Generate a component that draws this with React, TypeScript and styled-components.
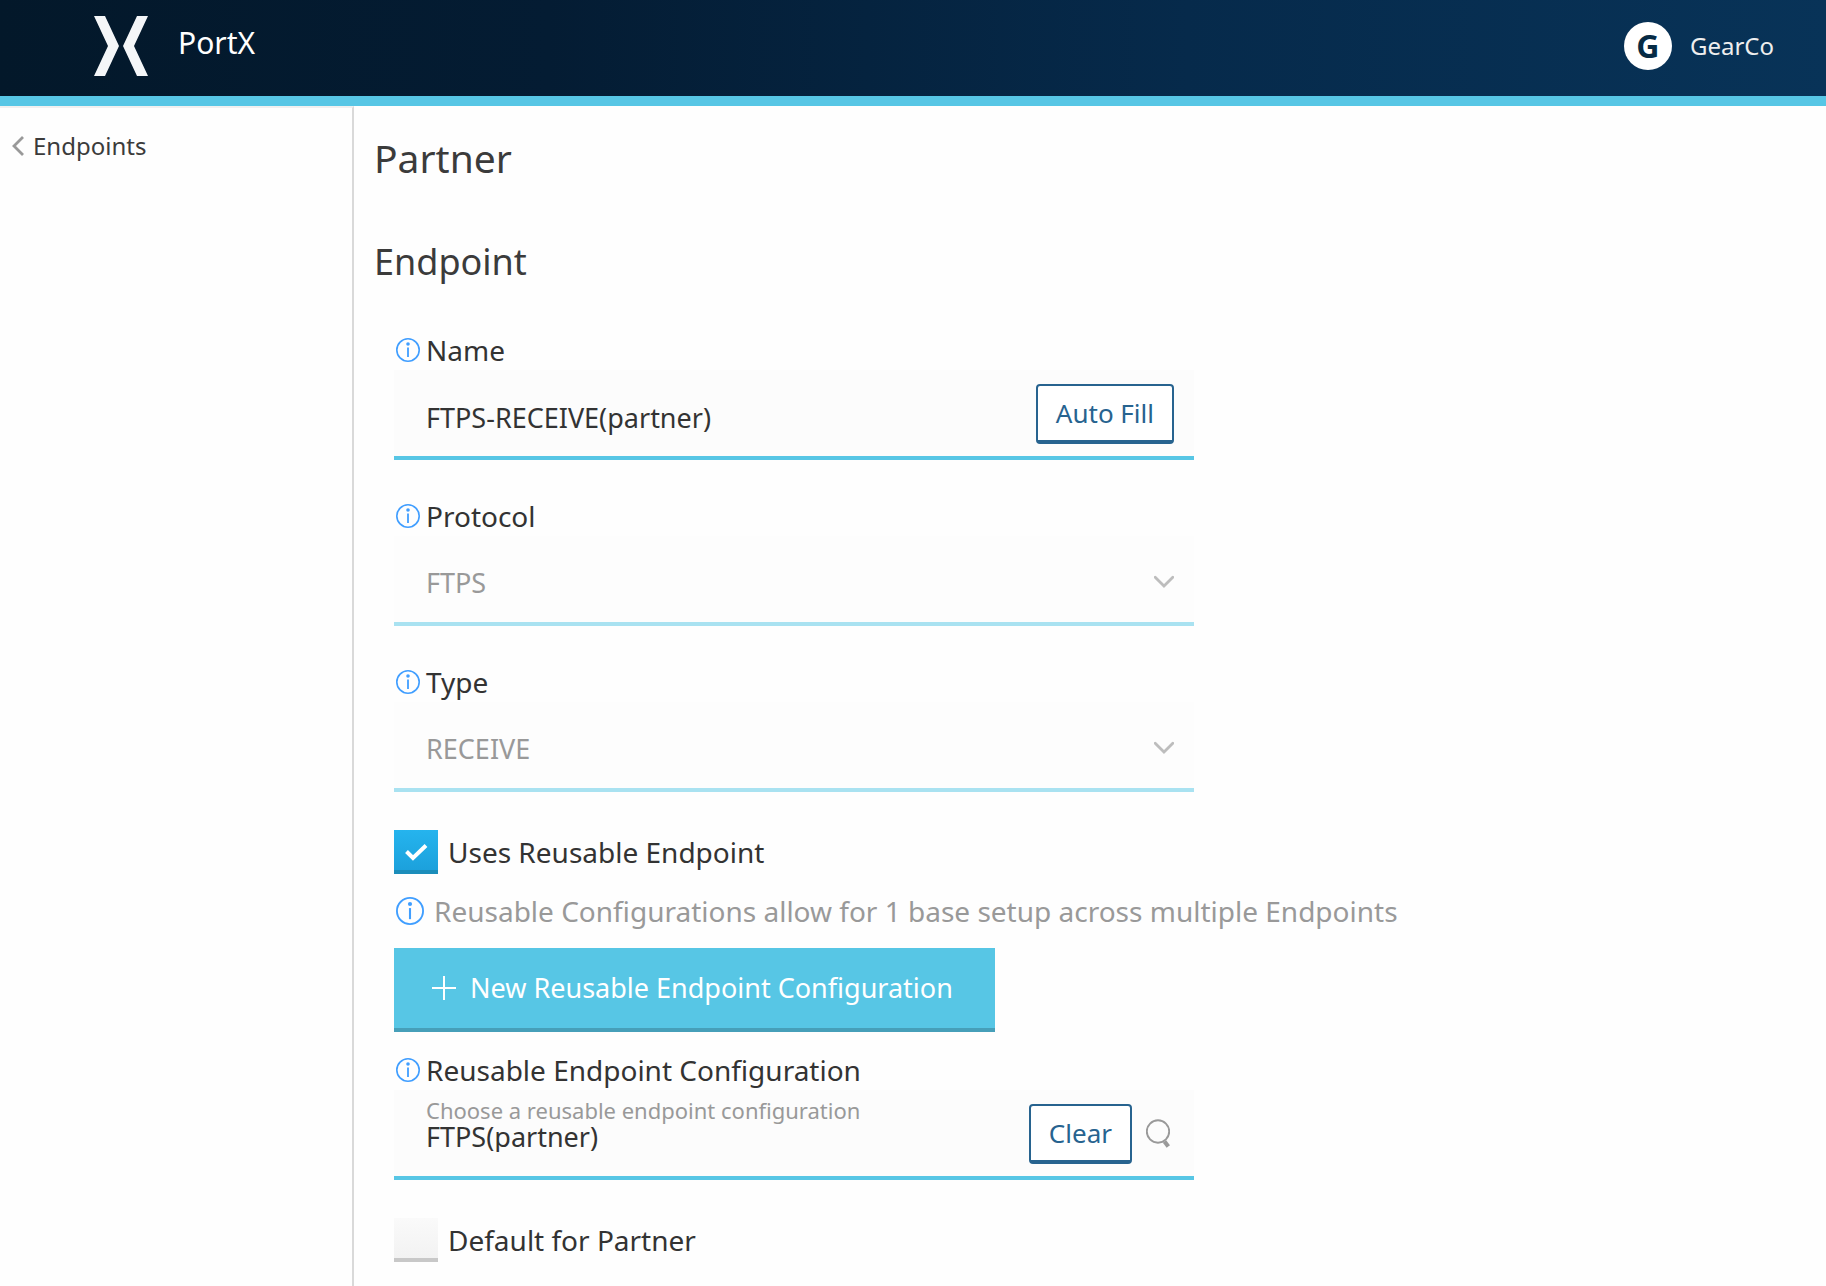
import React, { useState } from "react";
import styled, { createGlobalStyle } from "styled-components";

const GlobalStyle = createGlobalStyle`
  *, *::before, *::after { box-sizing: border-box; }
  body {
    margin: 0;
    background: #fefefe;
    color: #333333;
    font-family: "Noto Sans", "Open Sans", sans-serif;
    font-size: 28px;
    line-height: 40px;
  }
  button, input, select { font: inherit; color: inherit; }
  svg { display: block; flex: none; }
`;

const Page = styled.div`
  min-height: 100vh;
  display: flex;
  flex-direction: column;
`;

const Header = styled.header`
  display: flex;
  align-items: center;
  justify-content: space-between;
  height: 106px;
  padding: 0 52px 4px 94px;
  border-bottom: 10px solid #57c6e5;
  background: linear-gradient(90deg, #03182a 0%, #041c33 30%, #062a4b 65%, #083358 100%);
`;

const Brand = styled.a`
  display: flex;
  align-items: center;
  gap: 30px;
  color: #ffffff;
  text-decoration: none;
`;

const BrandName = styled.span`
  padding-bottom: 6px;
  font-size: 30px;
`;

const Account = styled.div`
  display: flex;
  align-items: center;
  gap: 18px;
  color: #eeeeee;
  font-size: 24px;
`;

const Avatar = styled.span`
  display: grid;
  place-items: center;
  width: 48px;
  height: 48px;
  border-radius: 50%;
  background: #ffffff;
  color: #062b45;
  font-size: 32px;
  font-weight: 700;
`;

const Body = styled.div`
  flex: 1;
  display: flex;
`;

const Sidebar = styled.nav`
  flex: none;
  width: 354px;
  padding: 22px 12px;
  border-top: 2px solid #f0f0f0;
  border-right: 2px solid #d9d9d9;
`;

const BackLink = styled.a`
  display: flex;
  align-items: center;
  gap: 8px;
  color: #3b3b3b;
  font-size: 24px;
  line-height: 32px;
  text-decoration: none;
`;

const Main = styled.main`
  flex: 1;
  min-width: 0;
  padding: 28px 20px 24px;
`;

const Title = styled.h1`
  margin: 0 0 56px;
  color: #3b3b3b;
  font-size: 39px;
  font-weight: 400;
  line-height: 48px;
`;

const Subtitle = styled.h2`
  margin: 0 0 44px;
  color: #3b3b3b;
  font-size: 36px;
  font-weight: 400;
  line-height: 48px;
`;

const Form = styled.form`
  display: flex;
  flex-direction: column;
  gap: 38px;
  padding-left: 20px;
`;

const FieldList = styled.div`
  display: flex;
  flex-direction: column;
  gap: 36px;
`;

const ReusableGroup = styled.div`
  display: flex;
  flex-direction: column;
  align-items: flex-start;
  gap: 18px;
`;

const Field = styled.div`
  width: 100%;
  max-width: 800px;
`;

const LabelRow = styled.div`
  display: flex;
  align-items: center;
  gap: 6px;
  padding-left: 2px;
`;

const Control = styled.div<{ $disabled?: boolean }>`
  display: flex;
  align-items: center;
  gap: 14px;
  height: 90px;
  padding: 2px 20px 0 32px;
  border-bottom: 4px solid ${(p) => (p.$disabled ? "#a9e2f1" : "#57c6e5")};
  background: ${(p) => (p.$disabled ? "#fdfdfd" : "#fcfcfc")};
  font-size: 27px;
`;

const TextInput = styled.input`
  flex: 1;
  min-width: 0;
  height: 84px;
  padding: 6px 0 0;
  border: 0;
  outline: 0;
  background: none;
`;

const Select = styled.select`
  flex: 1;
  min-width: 0;
  height: 84px;
  padding: 6px 0 0;
  border: 0;
  outline: 0;
  appearance: none;
  background: none;
  color: #999999;
  opacity: 1;
`;

const Lookup = styled.div`
  flex: 1;
  min-width: 0;
  height: 84px;
  padding-top: 6px;
  display: flex;
  flex-direction: column;
`;

const Hint = styled.label`
  color: #999999;
  font-size: 22px;
  line-height: 24px;
`;

const LookupInput = styled.input`
  width: 100%;
  height: 30px;
  padding: 0;
  border: 0;
  outline: 0;
  background: none;
`;

const OutlineButton = styled.button`
  height: 60px;
  padding: 0 18px;
  border: 2px solid #27638f;
  border-bottom-width: 4px;
  border-radius: 4px;
  background: #ffffff;
  color: #27638f;
  font-size: 26px;
  line-height: 32px;
  white-space: nowrap;
  cursor: pointer;
`;

const IconButton = styled.button`
  padding: 0 4px 0 0;
  border: 0;
  background: none;
  cursor: pointer;
`;

const PrimaryButton = styled.button`
  display: flex;
  align-items: center;
  gap: 14px;
  height: 84px;
  padding: 0 42px 0 38px;
  border: 0;
  border-bottom: 4px solid #469fb9;
  background: #57c6e5;
  color: #ffffff;
  font-size: 27px;
  cursor: pointer;
`;

const Note = styled.p`
  display: flex;
  align-items: center;
  gap: 10px;
  margin: 0;
  padding-left: 2px;
  color: #999999;
  line-height: 38px;
`;

const CheckLabel = styled.label`
  display: flex;
  align-items: center;
  gap: 10px;
  height: 44px;
  cursor: pointer;
`;

const CheckMark = styled.span`
  display: grid;
  place-items: center;
  > * { grid-area: 1 / 1; }
  > svg { pointer-events: none; }
`;

const CheckInput = styled.input`
  appearance: none;
  width: 44px;
  height: 44px;
  margin: 0;
  border-bottom: 4px solid #c8c8c8;
  background: linear-gradient(#fafafa, #f2f2f2);
  cursor: pointer;
  &:checked {
    border-bottom-color: #1b8dba;
    background: linear-gradient(#25b4ee, #1ca1dc);
  }
`;

const Logo = () => (
  <svg width="54" height="60" viewBox="0 0 54 60" fill="#f4f6f8" aria-hidden="true">
    <path d="M0 0h11l14 30L11 60H0l14-30z" />
    <path d="M54 0H43L29 30l14 30h11L40 30z" />
  </svg>
);

const InfoIcon = ({ size = 24 }: { size?: number }) => (
  <svg width={size} height={size} viewBox="0 0 24 24" fill="none" aria-hidden="true">
    <circle cx="12" cy="12" r="11.2" stroke="#409eff" strokeWidth="1.6" />
    <circle cx="12" cy="6" r="1.8" fill="#409eff" />
    <path d="M12 9.500V19" stroke="#409eff" strokeWidth="1.800" />
  </svg>
);

const BackIcon = () => (
  <svg width="13" height="20" viewBox="0 0 13 20" fill="none" aria-hidden="true">
    <path d="M11 1L2 10l9 9" stroke="#999999" strokeWidth="2.8" />
  </svg>
);

const ChevronIcon = () => (
  <svg width="20" height="16" viewBox="0 -4 20 16" fill="none" aria-hidden="true">
    <path d="M1.200 1.200L10 10l8.800-8.800" stroke="#bdbdbd" strokeWidth="2.800" strokeLinecap="round" />
  </svg>
);

const SearchIcon = () => (
  <svg width="24" height="30" viewBox="0 0 24 30" fill="none" stroke="#999999" aria-hidden="true">
    <circle cx="12" cy="12.500" r="11.200" strokeWidth="1.900" />
    <path d="M18.500 22.500l3.800 5" strokeWidth="4.200" />
  </svg>
);

const PlusIcon = () => (
  <svg width="24" height="24" viewBox="0 0 24 24" stroke="#ffffff" strokeWidth="2" aria-hidden="true">
    <path d="M12 0v24M0 12h24" />
  </svg>
);

const TickIcon = () => (
  <svg width="24" height="18" viewBox="0 0 24 18" fill="none" aria-hidden="true">
    <path d="M2.500 8.500l6.500 6.500L22 2.500" stroke="#ffffff" strokeWidth="4" />
  </svg>
);

function FieldLabel({ htmlFor, children }: { htmlFor: string; children: React.ReactNode }) {
  return (
    <LabelRow>
      <InfoIcon />
      <label htmlFor={htmlFor}>{children}</label>
    </LabelRow>
  );
}

function LockedSelect({ id, label, value }: { id: string; label: string; value: string }) {
  return (
    <Field>
      <FieldLabel htmlFor={id}>{label}</FieldLabel>
      <Control $disabled>
        <Select id={id} disabled defaultValue={value}>
          <option>{value}</option>
        </Select>
        <ChevronIcon />
      </Control>
    </Field>
  );
}

function Checkbox({ label, initial }: { label: string; initial: boolean }) {
  const [checked, setChecked] = useState(initial);
  return (
    <CheckLabel>
      <CheckMark>
        <CheckInput type="checkbox" checked={checked} onChange={(e) => setChecked(e.target.checked)} />
        {checked && <TickIcon />}
      </CheckMark>
      {label}
    </CheckLabel>
  );
}

export default function App() {
  const [name, setName] = useState("FTPS-RECEIVE(partner)");
  const [config, setConfig] = useState("FTPS(partner)");

  return (
    <>
      <GlobalStyle />
      <Page>
        <Header>
          <Brand href="#">
            <Logo />
            <BrandName>PortX</BrandName>
          </Brand>
          <Account>
            <Avatar>G</Avatar>
            GearCo
          </Account>
        </Header>
        <Body>
          <Sidebar>
            <BackLink href="#endpoints">
              <BackIcon />
              Endpoints
            </BackLink>
          </Sidebar>
          <Main>
            <Title>Partner</Title>
            <Subtitle>Endpoint</Subtitle>
            <Form onSubmit={(e) => e.preventDefault()}>
              <FieldList>
                <Field>
                  <FieldLabel htmlFor="name">Name</FieldLabel>
                  <Control>
                    <TextInput id="name" value={name} onChange={(e) => setName(e.target.value)} />
                    <OutlineButton type="button" onClick={() => setName("FTPS-RECEIVE(partner)")}>
                      Auto Fill
                    </OutlineButton>
                  </Control>
                </Field>
                <LockedSelect id="protocol" label="Protocol" value="FTPS" />
                <LockedSelect id="type" label="Type" value="RECEIVE" />
              </FieldList>
              <ReusableGroup>
                <Checkbox label="Uses Reusable Endpoint" initial />
                <Note>
                  <InfoIcon size={28} />
                  Reusable Configurations allow for 1 base setup across multiple Endpoints
                </Note>
                <PrimaryButton type="button">
                  <PlusIcon />
                  New Reusable Endpoint Configuration
                </PrimaryButton>
                <Field>
                  <FieldLabel htmlFor="config">Reusable Endpoint Configuration</FieldLabel>
                  <Control>
                    <Lookup>
                      <Hint htmlFor="config">Choose a reusable endpoint configuration</Hint>
                      <LookupInput id="config" value={config} onChange={(e) => setConfig(e.target.value)} />
                    </Lookup>
                    <OutlineButton type="button" onClick={() => setConfig("")}>
                      Clear
                    </OutlineButton>
                    <IconButton type="button" aria-label="Search">
                      <SearchIcon />
                    </IconButton>
                  </Control>
                </Field>
              </ReusableGroup>
              <Checkbox label="Default for Partner" initial={false} />
            </Form>
          </Main>
        </Body>
      </Page>
    </>
  );
}
